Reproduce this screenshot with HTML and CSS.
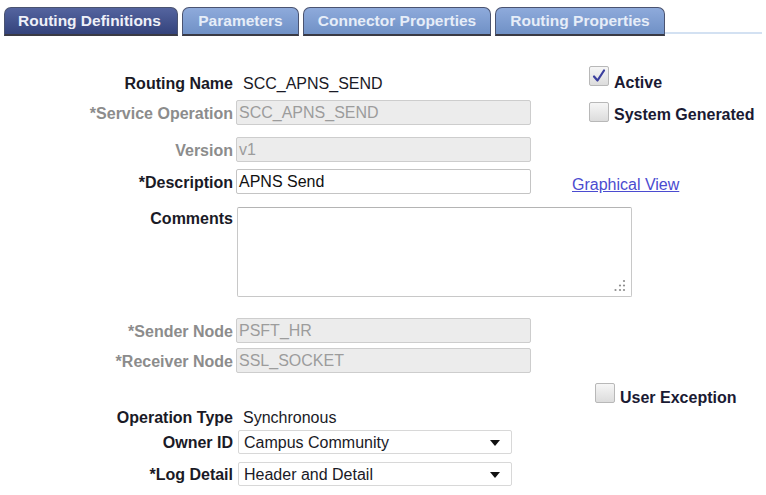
FILE: index.html
```html
<!DOCTYPE html>
<html>
<head>
<meta charset="utf-8">
<link rel="stylesheet" href="styles.css">
</head>
<body>
<div class="tabs">
  <div class="tab active t1">Routing Definitions</div>
  <div class="tab t2">Parameters</div>
  <div class="tab t3">Connector Properties</div>
  <div class="tab t4">Routing Properties</div>
  <div class="tabline"></div>
</div>
<div class="form">
  <div class="row r1">
    <span class="lbl">Routing Name</span>
    <span class="val">SCC_APNS_SEND</span>
    <div class="chk c-active">
      <span class="box"><svg width="16" height="16" viewBox="0 0 16 16"><path d="M3 8.5 L6.5 12.5 L13 2.5" fill="none" stroke="#3b3f9e" stroke-width="2.2" stroke-linecap="round" stroke-linejoin="round"/></svg></span>
      <span class="ctext">Active</span>
    </div>
  </div>
  <div class="row r2">
    <span class="lbl dis">*Service Operation</span>
    <div class="inp disabled">SCC_APNS_SEND</div>
    <div class="chk c-sys">
      <span class="box"></span>
      <span class="ctext">System Generated</span>
    </div>
  </div>
  <div class="row r3">
    <span class="lbl dis">Version</span>
    <div class="inp disabled">v1</div>
  </div>
  <div class="row r4">
    <span class="lbl">*Description</span>
    <div class="inp">APNS Send</div>
    <a class="link" href="#">Graphical View</a>
  </div>
  <div class="row r5">
    <span class="lbl top">Comments</span>
    <div class="ta">
      <svg class="grip" width="13" height="13" viewBox="0 0 13 13" fill="#8e8e8e"><circle cx="11" cy="2" r="1.1"/><circle cx="7" cy="6.5" r="1.1"/><circle cx="11" cy="6.5" r="1.1"/><circle cx="2.5" cy="11" r="1.1"/><circle cx="7" cy="11" r="1.1"/><circle cx="11" cy="11" r="1.1"/></svg>
    </div>
  </div>
  <div class="row r6">
    <span class="lbl dis">*Sender Node</span>
    <div class="inp disabled">PSFT_HR</div>
  </div>
  <div class="row r7">
    <span class="lbl dis">*Receiver Node</span>
    <div class="inp disabled">SSL_SOCKET</div>
  </div>
  <div class="row r8">
    <span class="lbl"></span>
    <span></span>
    <div class="chk c-user">
      <span class="box"></span>
      <span class="ctext">User Exception</span>
    </div>
  </div>
  <div class="row r9">
    <span class="lbl">Operation Type</span>
    <span class="val">Synchronous</span>
  </div>
  <div class="row r10">
    <span class="lbl">Owner ID</span>
    <div class="sel">Campus Community<span class="arrow"></span></div>
  </div>
  <div class="row r11">
    <span class="lbl">*Log Detail</span>
    <div class="sel">Header and Detail<span class="arrow"></span></div>
  </div>
</div>
</body>
</html>
```
FILE: styles.css
```css
body {
  margin: 0;
  background: #fff;
  font-family: "Liberation Sans", Arial, sans-serif;
  font-size: 16px;
  color: #1a1a26;
}

.tabs {
  display: flex;
  align-items: flex-end;
  gap: 4px;
  padding: 7px 0 0 4px;
  height: 29px;
}

.tab {
  box-sizing: border-box;
  height: 29px;
  border: 1px solid #4a5370;
  border-bottom: 2px solid #3a3a44;
  border-radius: 7px 7px 0 0;
  background: linear-gradient(#8eaadb, #7091c6);
  color: #e6edf8;
  font-weight: bold;
  font-size: 15.5px;
  line-height: 26px;
  text-align: center;
}

.tab.active {
  background: linear-gradient(#54649f, #34437c);
  color: #eef0f8;
}

.t1 { width: 174px; padding-right: 3px; }
.t2 { width: 117px; }
.t3 { width: 188px; }
.t4 { width: 170px; }

.tabline {
  flex: 1;
  height: 2px;
  margin: 0 4px 2px -4px;
  background: #d3e1f2;
}

.form {
  margin-top: 34px;
}

.row {
  display: grid;
  grid-template-columns: 236px 336px 1fr;
  align-items: center;
}

.lbl {
  font-weight: bold;
  text-align: right;
  padding-right: 3px;
  padding-top: 2px;
  color: #1a1a26;
  white-space: nowrap;
}

.lbl.dis {
  color: #8c8c8c;
}

.lbl.top {
  align-self: start;
  margin-top: 1px;
}

.val {
  padding-left: 7px;
  padding-top: 2px;
  color: #1a1a26;
}

.inp {
  box-sizing: border-box;
  width: 295px;
  height: 25px;
  border: 1px solid #c4c4c4;
  border-radius: 2px;
  background: #fff;
  padding-left: 2px;
  line-height: 24px;
  color: #111;
}

.inp.disabled {
  background: #ececec;
  border-color: #cdcdcd;
  color: #9c9c9c;
}

.ta {
  position: relative;
  grid-column: 2 / 4;
  box-sizing: border-box;
  width: 395px;
  height: 90px;
  margin-left: 1px;
  border: 1px solid #c8c8c8;
  border-top-color: #b4b4b4;
  border-radius: 2px;
  background: #fff;
}

.grip {
  position: absolute;
  right: 5px;
  bottom: 4px;
}

.sel {
  position: relative;
  box-sizing: border-box;
  width: 274px;
  height: 24px;
  margin-left: 2px;
  border: 1px solid #d8d8d8;
  border-radius: 2px;
  background: #fff;
  padding-left: 5px;
  line-height: 23px;
  color: #1a1a26;
}

.arrow {
  position: absolute;
  right: 11px;
  top: 9px;
  width: 0;
  height: 0;
  border-left: 5px solid transparent;
  border-right: 5px solid transparent;
  border-top: 6px solid #111;
}

.chk {
  display: flex;
  align-items: flex-start;
  align-self: start;
}

.box {
  box-sizing: border-box;
  flex: none;
  width: 20px;
  height: 20px;
  border: 1px solid #b8b8b8;
  border-radius: 2px;
  background: linear-gradient(#f6f6f6, #dcdcdc);
  display: flex;
  align-items: center;
  justify-content: center;
}

.ctext {
  margin-left: 5px;
  margin-top: 5px;
  font-weight: bold;
  line-height: 16px;
  color: #1a1a33;
  white-space: nowrap;
}

.link {
  align-self: center;
  margin-top: 7px;
  color: #4b4bd0;
  text-decoration: underline;
  white-space: nowrap;
}

.r1 { height: 26px; margin-top: 0; }
.r1 .c-active { margin-top: -4px; margin-left: 17px; }
.r1 .ctext { margin-top: 9px; }

.r2 { height: 25px; margin-top: 4px; }
.r2 .c-sys { margin-top: 2px; margin-left: 17px; }

.r3 { height: 25px; margin-top: 12px; }
.r4 { height: 25px; margin-top: 7px; }
.r5 { height: 90px; margin-top: 13px; }
.r6 { height: 25px; margin-top: 21px; }
.r7 { height: 25px; margin-top: 5px; }
.r8 { height: 20px; margin-top: 12px; }
.r8 .c-user { margin-left: 23px; margin-top: -2px; }
.r8 .ctext { margin-top: 7px; }
.r9 { height: 22px; margin-top: 1px; }
.r10 { height: 24px; margin-top: 2px; }
.r11 { height: 24px; margin-top: 8px; }
```
